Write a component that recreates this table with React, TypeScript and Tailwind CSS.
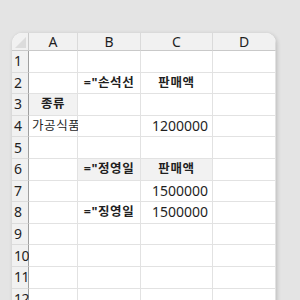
const font = '"Noto Sans", "Noto Sans CJK KR", sans-serif';

type Cell = { text?: string; align?: 'left' | 'center' | 'right'; bold?: boolean; shade?: boolean };

const columns = ['A', 'B', 'C', 'D'];

const rows: Record<number, Record<string, Cell>> = {
  2: { B: { text: '="손석선', align: 'center', bold: true }, C: { text: '판매액', align: 'center', bold: true } },
  3: { A: { text: '종류', align: 'center', bold: true, shade: true } },
  4: { A: { text: '가공식품', align: 'left' }, C: { text: '1200000', align: 'right' } },
  6: {
    B: { text: '="정영일', align: 'center', bold: true, shade: true },
    C: { text: '판매액', align: 'center', bold: true, shade: true },
  },
  7: { C: { text: '1500000', align: 'right' } },
  8: { B: { text: '="징영일', align: 'center', bold: true }, C: { text: '1500000', align: 'right' } },
};

const alignClass = {
  left: 'justify-start pl-[3px]',
  center: 'justify-center',
  right: 'justify-end pr-[4px]',
};

// hangul reads a touch smaller than the digits in the sheet
const isNumber = (s?: string) => !!s && /^\d+$/.test(s);

export default function App() {
  return (
    <div className="w-[300px] h-[300px] overflow-hidden bg-[#e4e4e4] pt-[33px] pl-[12px]" style={{ fontFamily: font }}>
      <div className="w-[264px] rounded-t-[10px] bg-white overflow-hidden shadow-[1px_1px_4px_rgba(0,0,0,0.18)]">
        <div className="grid grid-cols-[17px_49px_63px_72px_63px] text-[14px] text-[#1f1f1f]">
          {/* column header row */}
          <div className="relative h-[18px] bg-[#f1f1f1] border-r border-b border-[#c9c9c9]">
            <div className="absolute right-[2px] bottom-[2px] w-0 h-0 border-l-[11px] border-l-transparent border-b-[11px] border-b-[#dcdcdc]" />
          </div>
          {columns.map((c) => (
            <div
              key={c}
              className="h-[18px] bg-[#f1f1f1] border-r border-b border-r-[#dadada] border-b-[#c9c9c9] flex items-center justify-center leading-none"
            >
              {c}
            </div>
          ))}

          {/* body rows */}
          {Array.from({ length: 12 }, (_, i) => i + 1).map((r) => (
            <div key={r} className="contents">
              <div className="h-[21.6px] bg-[#f1f1f1] border-r border-b border-r-[#9f9f9f] border-b-[#dcdcdc] flex items-center pl-[2px] leading-none tracking-[-0.5px]">
                {r}
              </div>
              {columns.map((c) => {
                const cell = rows[r]?.[c];
                return (
                  <div
                    key={c}
                    className={`h-[21.6px] border-r border-b border-[#e2e2e2] flex items-center leading-none whitespace-nowrap ${
                      cell?.shade ? 'bg-[#f2f2f2]' : 'bg-white'
                    } ${alignClass[cell?.align ?? 'left']} ${cell?.bold ? 'font-bold' : ''} ${
                      cell?.text && !isNumber(cell.text) ? 'text-[12.5px] tracking-[0.6px]' : ''
                    }`}
                  >
                    {cell?.text}
                  </div>
                );
              })}
            </div>
          ))}
        </div>
      </div>
    </div>
  );
}
